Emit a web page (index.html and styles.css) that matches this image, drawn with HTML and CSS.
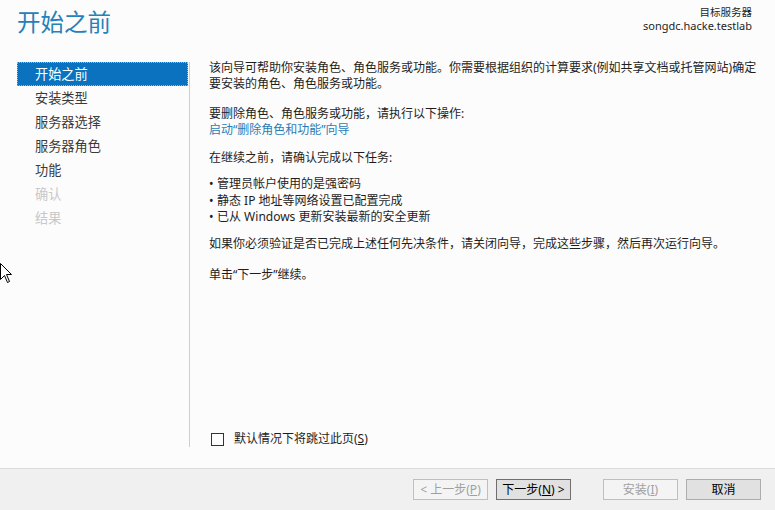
FILE: index.html
```html
<!DOCTYPE html>
<html lang="zh-CN">
<head>
<meta charset="utf-8">
<title>添加角色和功能向导</title>
<link rel="stylesheet" href="styles.css">
</head>
<body>
<div class="window">
  <header class="header">
    <h1 class="title">开始之前</h1>
    <div class="target">
      <div class="target-label">目标服务器</div>
      <div class="target-name">songdc.hacke.testlab</div>
    </div>
  </header>
  <main class="main">
    <nav class="sidebar">
      <div class="nav-item selected">开始之前</div>
      <div class="nav-item">安装类型</div>
      <div class="nav-item">服务器选择</div>
      <div class="nav-item">服务器角色</div>
      <div class="nav-item">功能</div>
      <div class="nav-item disabled">确认</div>
      <div class="nav-item disabled">结果</div>
    </nav>
    <section class="content">
      <div class="text">
        <p class="p1">该向导可帮助你安装角色、角色服务或功能。你需要根据组织的计算要求(例如共享文档或托管网站)确定要安装的角色、角色服务或功能。</p>
        <p class="p2">要删除角色、角色服务或功能，请执行以下操作:</p>
        <p class="link">启动“删除角色和功能”向导</p>
        <p class="p3">在继续之前，请确认完成以下任务:</p>
        <ul class="tasks">
          <li>管理员帐户使用的是强密码</li>
          <li>静态 IP 地址等网络设置已配置完成</li>
          <li>已从 Windows 更新安装最新的安全更新</li>
        </ul>
        <p class="p4">如果你必须验证是否已完成上述任何先决条件，请关闭向导，完成这些步骤，然后再次运行向导。</p>
        <p class="p5">单击“下一步”继续。</p>
      </div>
      <label class="skip">
        <span class="checkbox"></span>
        <span>默认情况下将跳过此页(<u>S</u>)</span>
      </label>
    </section>
  </main>
  <footer class="footer">
    <button class="btn disabled">&lt; 上一步(<u>P</u>)</button>
    <button class="btn default">下一步(<u>N</u>) &gt;</button>
    <button class="btn disabled wide-gap">安装(<u>I</u>)</button>
    <button class="btn">取消</button>
  </footer>
  <svg class="cursor" width="13" height="22" viewBox="0 0 13 22">
    <path d="M0.5 0.5 L0.5 16.5 L4.5 12.5 L7.5 19.5 L9.5 18.5 L6.5 11.5 L11.5 11.5 Z" fill="#fff" stroke="#000" stroke-width="1"/>
  </svg>
</div>
</body>
</html>
```
FILE: styles.css
```css
* { box-sizing: border-box; }
html, body { margin: 0; padding: 0; }
body {
  width: 775px;
  height: 510px;
  overflow: hidden;
  font-family: "Noto Sans", "Noto Sans CJK SC", sans-serif;
  color: #1e1e1e;
}
.window {
  position: relative;
  width: 775px;
  height: 510px;
  display: flex;
  flex-direction: column;
  background: #fcfcfc;
}
.header {
  height: 58px;
  display: flex;
  justify-content: space-between;
  align-items: flex-start;
  padding: 0 23px 0 17px;
}
.title {
  margin: 7px 0 0 0;
  font-size: 23.5px;
  font-weight: 400;
  line-height: 30px;
  color: #2482ba;
}
.target {
  margin-top: 5px;
  text-align: right;
  font-size: 10.5px;
  line-height: 14px;
  color: #1e1e1e;
}
.target-name { font-size: 11px; }
.main {
  flex: 1;
  display: flex;
  min-height: 0;
}
.sidebar {
  width: 173px;
  margin: 4px 0 21px 17px;
  border-right: 1px solid #cfcfcf;
}
.nav-item {
  width: 171px;
  height: 24px;
  line-height: 24px;
  padding-left: 18px;
  font-size: 13.2px;
  color: #3a3a3a;
}
.nav-item.selected {
  background: #0a72bf;
  color: #fff;
  outline: 1px dotted #8fb8dd;
  outline-offset: -1px;
}
.nav-item.disabled { color: #c8c8c8; }
.content {
  flex: 1;
  display: flex;
  flex-direction: column;
  justify-content: space-between;
  padding: 2px 16px 21px 19px;
  font-size: 12px;
  line-height: 16px;
}
.text p { margin: 0; }
.text .p2 { margin-top: 14px; }
.text .link { color: #2a7db5; }
.text .p3 { margin-top: 12px; }
.tasks {
  list-style: none;
  margin: 10px 0 0 0;
  padding: 0;
  line-height: 16.5px;
}
.tasks li::before {
  content: "•";
  display: inline-block;
  width: 8px;
  font-family: "Noto Sans", sans-serif;
}
.text .p4 { margin-top: 10px; }
.text .p5 { margin-top: 15px; }
.skip {
  display: flex;
  align-items: center;
  gap: 10px;
  margin-left: 2px;
  line-height: 16px;
}
.checkbox {
  width: 13px;
  height: 13px;
  border: 1px solid #333;
  background: #fff;
}
.footer {
  height: 42px;
  background: #f0f0f0;
  border-top: 1px solid #dcdcdc;
  display: flex;
  align-items: flex-start;
  justify-content: flex-end;
  padding: 10px 14px 0 0;
  gap: 8px;
}
.btn {
  width: 75px;
  height: 21px;
  padding: 0;
  font-family: inherit;
  font-size: 12px;
  line-height: 19px;
  background: #e1e1e1;
  border: 1px solid #adadad;
  color: #000;
}
.btn.default {
  border: 1px solid #6f6f6f;
  box-shadow: inset 0 0 0 1px #e1e1e1;
}
.btn.disabled {
  background: #f4f4f4;
  border-color: #bfbfbf;
  color: #a0a0a0;
}
.btn.wide-gap { margin-left: 24px; }
.cursor {
  position: absolute;
  left: 0;
  top: 263px;
}
```
